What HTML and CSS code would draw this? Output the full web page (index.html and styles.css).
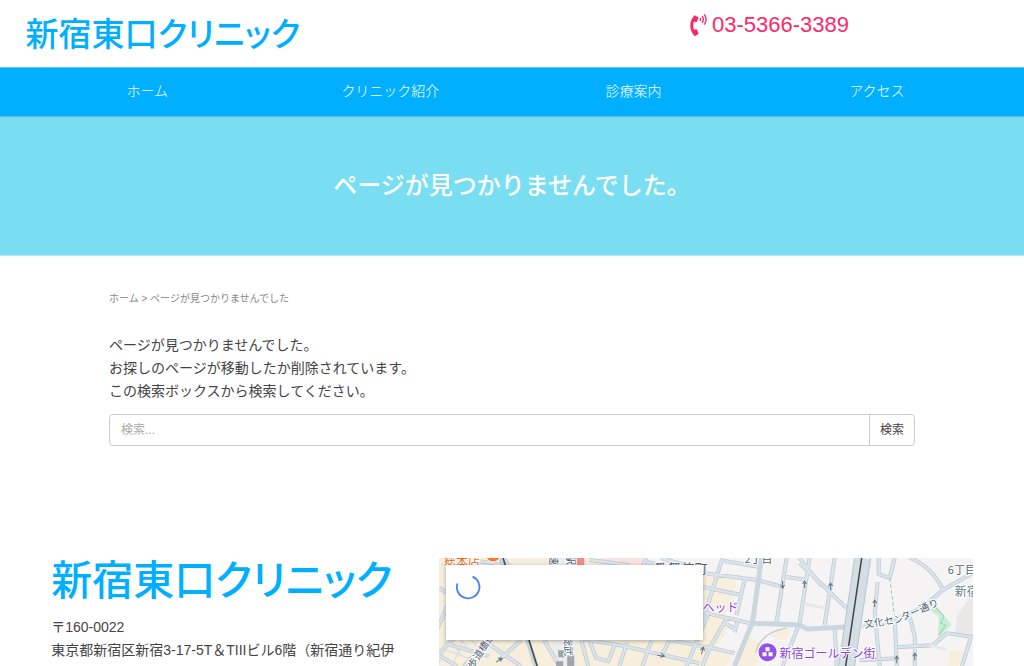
FILE: index.html
```html
<!DOCTYPE html>
<html lang="ja">
<head>
<meta charset="utf-8">
<meta name="viewport" content="width=device-width, initial-scale=1">
<title>ページが見つかりませんでした | 新宿東口クリニック</title>
<link rel="stylesheet" href="styles.css">
</head>
<body>
<header class="site-header">
  <a class="logo" href="#">新宿東口クリニック</a>
  <a class="phone" href="tel:0353663389">
    <svg class="phone-icon" viewBox="0 0 384 512" aria-hidden="true"><path d="M97.333 506.966c-129.874-129.874-129.681-340.252 0-469.933 5.698-5.698 14.527-6.632 21.263-2.422l64.817 40.513a17.187 17.187 0 0 1 6.849 20.958l-32.408 81.021a17.188 17.188 0 0 1-17.669 10.719l-55.81-5.58c-21.051 58.261-20.612 122.471 0 179.515l55.811-5.581a17.188 17.188 0 0 1 17.669 10.719l32.408 81.022a17.188 17.188 0 0 1-6.849 20.958l-64.817 40.513a17.19 17.19 0 0 1-21.265-2.422zM247.126 95.473c11.832 20.047 11.832 45.008 0 65.055-3.95 6.693-13.108 7.959-18.718 2.581l-5.975-5.726c-3.911-3.748-4.793-9.622-2.261-14.41a32.063 32.063 0 0 0 0-29.945c-2.533-4.788-1.65-10.662 2.261-14.41l5.975-5.726c5.61-5.378 14.768-4.112 18.718 2.581zm91.787-91.187c60.14 71.604 60.092 175.882 0 247.428-4.474 5.327-12.53 5.746-17.552.933l-5.798-5.557c-4.56-4.371-4.977-11.529-.93-16.379 49.687-59.538 49.646-145.933 0-205.422-4.047-4.85-3.631-12.008.93-16.379l5.798-5.557c5.022-4.813 13.078-4.394 17.552.933zm-45.972 44.941c36.05 46.322 36.108 111.149 0 157.546-4.39 5.641-12.697 6.251-17.856 1.304l-5.818-5.579c-4.4-4.219-4.998-11.095-1.285-15.931 26.536-34.564 26.534-82.572 0-117.134-3.713-4.836-3.115-11.711 1.285-15.931l5.818-5.579c5.159-4.947 13.466-4.337 17.856 1.304z"/></svg>
    <span>03-5366-3389</span>
  </a>
</header>

<nav class="global-nav">
  <ul class="nav-list">
    <li><a href="#">ホーム</a></li>
    <li><a href="#">クリニック紹介</a></li>
    <li><a href="#">診療案内</a></li>
    <li><a href="#">アクセス</a></li>
  </ul>
</nav>

<div class="hero"><h1>ページが見つかりませんでした。</h1></div>

<main class="content">
  <div class="breadcrumb"><a href="#">ホーム</a> &gt; ページが見つかりませんでした</div>
  <p class="message">ページが見つかりませんでした。<br>お探しのページが移動したか削除されています。<br>この検索ボックスから検索してください。</p>
  <form class="search">
    <input type="search" placeholder="検索..." aria-label="検索">
    <button type="submit">検索</button>
  </form>
</main>

<footer class="site-footer">
  <div class="clinic">
    <a class="logo logo-large" href="#">新宿東口クリニック</a>
    <address>〒160-0022<br>東京都新宿区新宿3-17-5T＆TIIIビル6階（新宿通り紀伊</address>
  </div>
  <div class="map">
    <svg class="map-canvas" viewBox="0 0 533 108" preserveAspectRatio="xMinYMin slice" role="img" aria-label="地図">
      <defs>
        <path id="streets" d="M12 0 4 8M38 3 68 7M65 0 75 18M150 2 190 7M0 30 8 35M8 48-1 70M0 95 17 79M5 85 50 98M48 82 25 108M50 86 82 108M82 82 60 102M0 97 18 108M105 82 120 108M142 81 180 87 260 105M150 82 157 100 169 103 176 85M149 108 142 82M188 84 180 108M212 83 203 108M230 82 273 90 295 95M230 82 224 94M270 53 247 108M288 59 270 90 263 108M207 4 263 15 318 22 343 29M207 0 203 9M222 0 255 10M283 0 264 61M285 3 320 9M263 29 302 37M305 22 297 57M263 54 310 65M285 65 296 71M299 60 295 74M347 0 337 64M347 19 367 22M370 0 360 65 343 108M360 0 382 28M360 5 407 50M395 0 385 67M395 70 397 108M470 0Q491 8 503 31M438 24 435 54 440 108M455 59 457 108M470 59 475 78 475 108M420 102 457 100M458 89 493 87 507 75 533 79M531 79 522 108M439 0 439 16 450 20 455 0M533 15 503 32 488 45Q465 62 423 69"/>
      </defs>
      <rect width="533" height="108" fill="#f5f3f4"/>
      <path fill="#f7eedb" d="M0 0H200L204 6 297 22 292 45 285 57 290 68 284 79 273 92 292 96 287 108H0Z"/>
      <path fill="#f7eedb" d="M306 77 323 86 316 108H299ZM334 72 352 71 346 82 332 79ZM511 92 523 93 519 108H508Z"/>
      <path fill="#fbe1df" d="M160 0H206L204 8H160Z"/>
      <path fill="#f08b8b" d="M137 0h8v8h-8z"/>
      <path fill="#ededee" d="M108 0H137V108H115Z"/>
      <path fill="#ebe7e6" d="M533 35 517 58 515 75 533 80Z"/>
      <path fill="#c5efd7" d="M492 44 512 67 498 79 499 58 486 50Z"/>
      <path fill="none" stroke="#9fcfb5" stroke-width="1" d="M495 48 504 58 501 65 506 67 499 77"/>
      <g fill="none" stroke-linejoin="round">
        <use href="#streets" stroke="#becbd6" stroke-width="4"/>
        <use href="#streets" stroke="#dbe4eb" stroke-width="2.400"/>
        <path stroke="#cbd7df" stroke-width="5" d="M322 0 313 64 295 108M310 65 360 67 368 71 407 69"/>
        <path stroke="#d3dee5" stroke-width="16" d="M423 0 407 108"/>
        <path stroke="#b8c5ce" stroke-width="1" d="M431 0 415 108M415 0 399 108M316 95Q320 75 347 70"/>
        <path stroke="#c6d1da" stroke-width="5" d="M62 0 97 108"/>
        <path stroke="#444" stroke-width="1.500" d="M422 0 406 108M64 0 98 108"/>
        <path stroke="#d0dae1" stroke-width="1" d="M10 82 22 96M20 80 33 94M30 79 42 93M4 91 40 104M10 82 0 105M23 84 15 104"/>
        <path stroke="#8ed8b0" stroke-width="1" stroke-dasharray="4 2" d="M450 20 455 60"/>
        <path stroke="#e9e8e8" stroke-width="3" d="M365 46 385 50M490 87 506 91"/>
      </g>
      <path fill="#a2a4a7" d="M119 92h6v7h-6zM128 97h7v11h-7zM117 103h7v5h-7z"/>
      <g fill="none" stroke="#617380" stroke-width="1">
        <path d="M343 30v-7m-2 4 2 3 2-3M365 30v-7m-2 3 2-3 2 3M391 32v-7m-2 3 2-3 2 3M435 49v-7m-2 3 2-3 2 3M457 105v-7m-2 3 2-3 2 3M475 102v-7m-2 3 2-3 2 3M218 97l7 1m-3-3 3 3-4 1M262 96l2-7m-3 3 3-3 1 4M57 104l6-4m-4 0 4 0-2 3"/>
      </g>
      <g class="map-text">
        <text class="food" x="5" y="8">総本店</text>
        <text class="area" x="216" y="15">歌舞伎町</text>
        <text x="305" y="5">2丁目</text>
        <text x="508" y="16">6丁目</text>
        <text class="district" x="515" y="38">新宿</text>
        <text class="purple" x="263" y="54">ヘッド</text>
        <text class="purple" x="340" y="100">新宿ゴールデン街</text>
        <text class="road" transform="translate(425 70) rotate(-9)">文化セン</text>
        <text class="road" transform="translate(463 63) rotate(-24)">ター通り</text>
        <text class="road" transform="translate(34 111) rotate(-57)">歩道橋通</text>
        <text class="road" transform="translate(125 78) rotate(88)">総武</text>
        <text class="road" transform="translate(111 -13) rotate(90)">快速</text>
        <text class="road" transform="translate(128 -13) rotate(90)">新駅</text>
      </g>
      <circle cx="54" cy="-4" r="8" fill="#ff7b25" stroke="#fff"/>
      <path d="M318 94a10 10 0 1 1 20 0c0 6-6 8-10 14-4-6-10-8-10-14Z" fill="#fff"/>
      <circle cx="328" cy="94" r="9" fill="#9351e6"/>
      <path d="M326 89h4v4h-4zM323 94h4v4h-4zM329 94h4v4h-4z" fill="#fff"/>
    </svg>
    <div class="map-card">
      <svg class="spinner" viewBox="0 0 26 26" aria-label="読み込み中"><path d="M17.500 2.600A11.300 11.300 0 1 1 2.400 9.500" fill="none" stroke="#4c83e9" stroke-width="1.800"/></svg>
    </div>
  </div>
</footer>
</body>
</html>
```
FILE: styles.css
```css
* {
  box-sizing: border-box;
}

body {
  margin: 0;
  overflow-x: hidden;
  background: #fff;
  color: #444;
  font: 14px/23px "Liberation Sans", "Noto Sans CJK JP", sans-serif;
}

a {
  color: inherit;
  text-decoration: none;
}

.site-header {
  display: grid;
  grid-template-columns: 9fr 8fr;
  align-items: start;
  width: 95%;
  min-height: 67px;
  margin: 0 auto;
  padding-top: 10px;
}

.logo {
  color: #00afff;
  font-family: "Noto Sans CJK JP", sans-serif;
  font-size: 33px;
  font-weight: 500;
  line-height: 44px;
  font-feature-settings: "palt";
  white-space: nowrap;
}

.phone {
  display: flex;
  justify-content: center;
  align-items: center;
  gap: 5px;
  color: #ff2768;
  font-size: 22px;
  line-height: 30px;
}

.phone-icon {
  width: 17px;
  height: 22px;
  fill: currentColor;
}

.global-nav {
  position: relative;
  border-top: 1px solid #5fc8fa;
  background: #00afff;
  color: #fff;
  box-shadow: 0 1px 1px rgba(0, 0, 0, 0.15);
}

.nav-list {
  display: grid;
  grid-template-columns: repeat(4, 1fr);
  width: 95%;
  margin: 0 auto;
  padding: 0;
  list-style: none;
  text-align: center;
  font-weight: 300;
}

.nav-list a {
  display: block;
  padding: 12px 0 13px;
}

.hero {
  padding: 52px 0 51px;
  border-bottom: 1px solid #b9e4ed;
  background: #7adef3;
  color: #fff;
  text-align: center;
}

.hero h1 {
  margin: 0;
  font-size: 24px;
  font-weight: 500;
  line-height: 36px;
}

.content {
  width: 90%;
  max-width: 806px;
  margin: 0 auto;
  padding: 33px 0 112px;
}

.breadcrumb {
  color: #888;
  font-size: 10px;
  line-height: 20px;
}

.message {
  margin: 25px 0 11px;
}

.search {
  display: flex;
}

.search input,
.search button {
  height: 32px;
  border: 1px solid #ccc;
  background: #fff;
  color: #444;
  font: inherit;
  font-size: 12px;
}

.search input {
  flex: 1;
  min-width: 0;
  padding: 0 11px;
  border-radius: 4px 0 0 4px;
  appearance: none;
}

.search input::placeholder {
  color: #aaa;
}

.search button {
  margin-left: -1px;
  padding: 0 10px;
  border-radius: 0 4px 4px 0;
}

.site-footer {
  display: grid;
  grid-template-columns: 7fr 11fr;
  gap: 48px;
  width: 90%;
  margin: 0 auto;
}

.clinic {
  min-width: 0;
}

.logo-large {
  display: block;
  font-size: 41px;
  line-height: 38px;
}

address {
  margin-top: 20px;
  font-style: normal;
  white-space: nowrap;
}

.map {
  position: relative;
  overflow: hidden;
  height: 108px;
}

.map-canvas {
  display: block;
  width: 100%;
  height: 100%;
}

.map-text {
  fill: #566570;
  stroke: #fff;
  stroke-width: 2px;
  paint-order: stroke;
  font: 11px "Noto Sans CJK JP", sans-serif;
}

.map-text .food {
  fill: #e66b18;
  font-size: 12px;
}

.map-text .purple {
  fill: #8a3fe0;
  font-size: 12px;
}

.map-text .area {
  font-size: 13px;
}

.map-text .district {
  fill: #6c7e8d;
  font-size: 12px;
}

.map-text .road {
  fill: #4e5f70;
  font-size: 10px;
}

.map-card {
  position: absolute;
  top: 7px;
  left: 7px;
  width: 257px;
  height: 75px;
  padding: 9px;
  background: #fff;
  box-shadow: 0 1px 4px rgba(0, 0, 0, 0.3);
}

.spinner {
  display: block;
  width: 26px;
  height: 26px;
}
```
